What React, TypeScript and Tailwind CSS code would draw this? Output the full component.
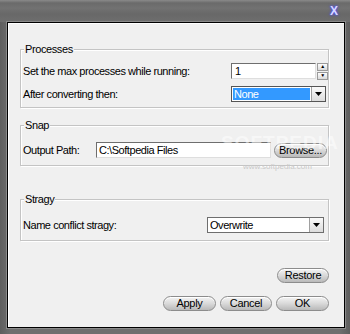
const font = { fontFamily: '"Liberation Sans", Arial, sans-serif' }

function Group({ title, className, children }: { title: string; className: string; children: React.ReactNode }) {
  return (
    <div className={`relative border border-[#c4c4c4] shadow-[inset_1px_1px_0_#fff,1px_1px_0_#fff] ${className}`}>
      <span className="absolute -top-[8px] left-[3px] bg-[#f0f0f0] px-[1px] text-[11px] leading-[14px] tracking-[-0.4px] text-black">
        {title}
      </span>
      {children}
    </div>
  )
}

function PillButton({ label, className }: { label: string; className: string }) {
  return (
    <button
      className={`flex h-[15px] items-center justify-center rounded-full border border-[#8c8c8c] bg-[linear-gradient(#f4f4f4,#d9d9d9_50%,#b9b9b9)] text-[11px] leading-none tracking-[-0.3px] text-black shadow-[inset_0_1px_0_#fff] ${className}`}
    >
      {label}
    </button>
  )
}

function DropArrow() {
  return (
    <span className="flex h-full w-[14px] items-center justify-center border-l border-[#a0a0a0] bg-[linear-gradient(#fafafa,#dcdcdc)]">
      <svg width="7" height="4" viewBox="0 0 7 4">
        <path d="M0 0h7L3.5 4z" fill="#000" />
      </svg>
    </span>
  )
}

export default function App() {
  return (
    <div
      className="flex h-[334px] w-[350px] flex-col bg-[linear-gradient(90deg,#5e5e5e,#6f6f6f_3%,#6f6f6f_97%,#5e5e5e)]"
      style={font}
    >
      {/* title bar */}
      <div className="flex h-[22px] items-center justify-end bg-[linear-gradient(#8a8a8a,#6a6a6a_3px,#727272_8px,#686868_14px,#6e6e6e)] pr-[12px]">
        <span className="text-[12px] font-bold leading-none text-[#d8d8ff] [text-shadow:0_0_2px_#5050ff,0_0_3px_#5050ff]">
          X
        </span>
      </div>

      {/* panel */}
      <div className="ml-[7px] h-[306px] w-[338px] border border-black bg-[#f0f0f0] text-[11px] tracking-[-0.45px] shadow-[inset_1px_1px_0_#fff,0_0_0_1px_#8a8a8a]">
        <div className="flex flex-col pl-[12px] pr-[15px] pt-[26px]">
          <Group title="Processes" className="h-[59px]">
            <div className="mt-[13px] flex h-[16px] items-center pl-[2px]">
              <span className="w-[208px] text-black">Set the max processes while running:</span>
              <div className="h-[16px] w-[85px] border border-t-[#6e6e6e] border-l-[#6e6e6e] border-b-[#dedede] border-r-[#dedede] bg-white pl-[3px] leading-[14px]">
                1
              </div>
              <div className="ml-[1px] flex h-[17px] w-[11px] flex-col">
                <span className="flex h-[8px] items-center justify-center border border-[#9a9a9a] bg-[linear-gradient(#fdfdfd,#dadada)] text-[5px] leading-none">
                  ▲
                </span>
                <span className="mt-[1px] flex h-[8px] items-center justify-center border border-[#9a9a9a] bg-[linear-gradient(#fdfdfd,#dadada)] text-[5px] leading-none">
                  ▼
                </span>
              </div>
            </div>
            <div className="mt-[7px] flex h-[16px] items-center pl-[2px]">
              <span className="w-[208px] text-black">After converting then:</span>
              <div className="flex h-[16px] w-[95px] border border-[#555] bg-white">
                <span className="m-[1px] flex-1 bg-[#3399ff] pl-[1px] leading-[12px] text-white">None</span>
                <DropArrow />
              </div>
            </div>
          </Group>

          <Group title="Snap" className="relative mt-[17px] h-[41px]">
            <div className="mt-[16px] flex h-[16px] items-center pl-[2px]">
              <span className="w-[73px] text-black">Output Path:</span>
              <div className="h-[16px] w-[175px] border border-t-[#6e6e6e] border-l-[#6e6e6e] border-b-[#dedede] border-r-[#dedede] bg-white pl-[2px] leading-[14px] text-black">
                C:\Softpedia Files
              </div>
              <PillButton label="Browse..." className="ml-[3px] w-[53px]" />
            </div>
            <span className="pointer-events-none absolute left-[200px] top-[7px] text-[19px] font-bold leading-none tracking-[1px] text-white/50">
              SOFTPEDIA
            </span>
            <span className="pointer-events-none absolute left-[222px] top-[37px] text-[8px] leading-none tracking-normal text-[#c8c8c8]">
              www.softpedia.com
            </span>
          </Group>

          <Group title="Stragy" className="mt-[33px] h-[42px]">
            <div className="mt-[17px] flex h-[16px] items-center pl-[2px]">
              <span className="w-[184px] text-black">Name conflict stragy:</span>
              <div className="flex h-[16px] w-[117px] border border-[#6e6e6e] bg-white">
                <span className="flex-1 pl-[2px] leading-[14px] text-black">Overwrite</span>
                <DropArrow />
              </div>
            </div>
          </Group>

          <div className="mt-[27px] flex justify-end">
            <PillButton label="Restore" className="w-[52px]" />
          </div>
          <div className="mt-[13px] flex justify-end gap-[4px]">
            <PillButton label="Apply" className="w-[53px]" />
            <PillButton label="Cancel" className="w-[52px]" />
            <PillButton label="OK" className="w-[53px]" />
          </div>
        </div>
      </div>
    </div>
  )
}
